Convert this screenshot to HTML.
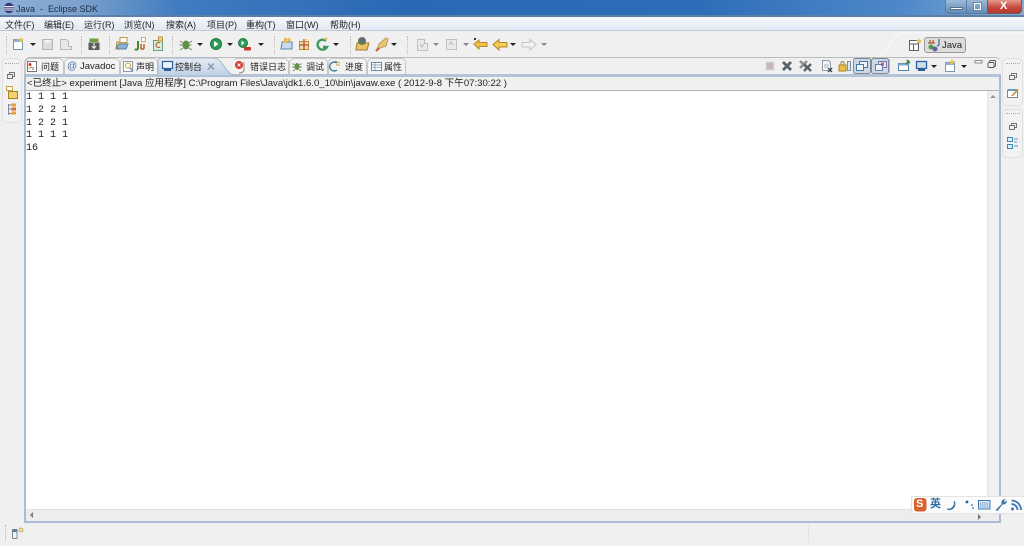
<!DOCTYPE html>
<html><head><meta charset="utf-8"><title>Java - Eclipse SDK</title>
<style>
html,body{margin:0;padding:0;width:1024px;height:546px;overflow:hidden;background:#f0f0f0}
body{position:relative;font-family:"Liberation Sans","Noto Sans CJK SC",sans-serif;font-size:9px;color:#222}
#w{position:absolute;left:0;top:0;width:1024px;height:546px;overflow:hidden;filter:blur(.3px)}
.a{position:absolute}
.t{position:absolute;white-space:nowrap;line-height:12px}
svg{position:absolute;overflow:visible}
.sep{position:absolute;width:0;border-left:1px dotted #bbb;height:18px;top:36px}
.tab{position:absolute;top:58px;height:16px;border:1px solid #c6c6c6;border-bottom:0;border-radius:5px 5px 0 0;background:#f3f3f3;box-sizing:border-box}
.arrow{position:absolute;width:0;height:0;border-left:3px solid transparent;border-right:3px solid transparent;border-top:3px solid #222}
</style></head><body><div id="w">

<!-- title bar -->
<div class="a" style="left:0;top:0;width:1024px;height:16px;background:linear-gradient(90deg,#8fb1d6 0,#7aa0cc 80px,#3f7cc0 180px,#2a69b4 400px,#2e6eb8 700px,#4d88c8 900px,#86abd2 1024px)"></div>
<div class="a" style="left:0;top:15px;width:1024px;height:2px;background:#5d7fa5"></div>
<svg style="left:3px;top:2px" width="12" height="12" viewBox="0 0 12 12"><circle cx="6" cy="6" r="5.2" fill="#3d3a7c"/><path d="M1 4.5h10M1 6.2h10M1.3 8h9.4" stroke="#e8e6f2" stroke-width=".9"/></svg>
<div class="t" style="left:16px;top:3px;font-size:9px;color:#1d2c40">Java&nbsp; -&nbsp; Eclipse SDK</div>
<!-- window buttons -->
<div class="a" style="left:945px;top:0;width:22px;height:14px;background:linear-gradient(#9dbbd8,#5f8db8);border:1px solid #5d7c9c;border-top:0;border-radius:0 0 0 4px;box-sizing:border-box"></div>
<div class="a" style="left:950px;top:7px;width:13px;height:3px;background:#fff;border:1px solid #56708c;box-sizing:border-box"></div>
<div class="a" style="left:967px;top:0;width:20px;height:14px;background:linear-gradient(#9dbbd8,#5f8db8);border-bottom:1px solid #5d7c9c;box-sizing:border-box"></div>
<div class="a" style="left:974px;top:3px;width:7px;height:7px;border:1.5px solid #fff;box-sizing:border-box;outline:1px solid #6a86a3"></div>
<div class="a" style="left:987px;top:0;width:35px;height:14px;background:linear-gradient(#e49a8c,#c5463a 60%,#b53a30);border:1px solid #6f5a5c;border-top:0;border-radius:0 0 4px 0;box-sizing:border-box"></div>
<div class="t" style="left:1000px;top:0px;font-size:11px;font-weight:bold;color:#fff">X</div>

<!-- menu bar -->
<div class="a" style="left:0;top:17px;width:1024px;height:14px;background:linear-gradient(#f6f8fc,#dfe7f3)"></div>
<div class="a" style="left:0;top:30px;width:1024px;height:1px;background:#c2c8d0"></div>
<div class="t" style="left:5px;top:19px">文件(F)</div>
<div class="t" style="left:44px;top:19px">编辑(E)</div>
<div class="t" style="left:84px;top:19px">运行(R)</div>
<div class="t" style="left:124px;top:19px">浏览(N)</div>
<div class="t" style="left:166px;top:19px">搜索(A)</div>
<div class="t" style="left:207px;top:19px">项目(P)</div>
<div class="t" style="left:246px;top:19px">重构(T)</div>
<div class="t" style="left:286px;top:19px">窗口(W)</div>
<div class="t" style="left:330px;top:19px">帮助(H)</div>

<!-- toolbar -->
<div class="sep" style="left:6px"></div><div class="sep" style="left:81px"></div><div class="sep" style="left:109px"></div><div class="sep" style="left:172px"></div><div class="sep" style="left:274px"></div><div class="sep" style="left:350px"></div><div class="sep" style="left:407px"></div>

<svg style="left:0;top:32px" width="640" height="24" viewBox="0 0 640 24">
<rect x="13.5" y="7.5" width="9" height="10" fill="#fff" stroke="#7d95ad"/><rect x="13.5" y="7.5" width="9" height="2.5" fill="#8fb0cf"/><path d="M21 5l1 2 2 0-1.500 1.500.5 2-2-1-2 1 .5-2L18 7h2z" fill="#e8c050"/>
<rect x="42.500" y="7.500" width="10" height="10" fill="#dcdcdc" stroke="#b4b4b4"/><rect x="45" y="8" width="5" height="3" fill="#f3f3f3"/>
<path d="M60.500 7.500h6l2 2v5h3v3h-11z" fill="#e8e8e8" stroke="#b8b8b8"/>
<rect x="89.500" y="6.500" width="9" height="3.500" fill="#6f9f3f"/><rect x="88.500" y="10.500" width="11" height="7.500" fill="#5d5d5d"/><path d="M94 11v5m-2-2l2 2.500 2-2.500" stroke="#fff" fill="none"/>
<path d="M117 10h9v7h-10z" fill="#f0d78a" stroke="#a88b3b"/><path d="M117 15l2-3h9l-2 5h-9z" fill="#8eb3d8" stroke="#5d7da0"/><rect x="120" y="5.500" width="7" height="5" fill="#fff" stroke="#b89a42"/>
<path d="M138 9v7c0 2-2 2-3 1" stroke="#3d8a32" stroke-width="2" fill="none"/><path d="M141 12v4c0 1.500 2.500 1.500 3 0v-4" stroke="#c6582c" stroke-width="1.500" fill="none"/><rect x="141.500" y="5.500" width="4" height="4" fill="#fff" stroke="#c9b15a"/>
<rect x="153.500" y="8.500" width="9" height="10" fill="#d7ecd9" stroke="#6ba17a"/><path d="M160 11a2.500 2.500 0 1 0 0 4" stroke="#b84f2a" fill="none"/><rect x="158.500" y="5" width="4" height="4" fill="#f3d480" stroke="#b89a42"/>
<ellipse cx="186" cy="13" rx="3.500" ry="4.500" fill="#5f8f4a"/><path d="M180 9l3 2m6 0l3-2M179.500 13h3m6 0h3M180 18l3-2m6 0l3 2" stroke="#6e8a4c"/>
<circle cx="216" cy="12" r="5.500" fill="#2e9b57" stroke="#1c7a41"/><path d="M214 9l4.500 3-4.500 3z" fill="#fff"/>
<circle cx="243" cy="11" r="4.500" fill="#2e9b57" stroke="#1c7a41"/><path d="M241.500 8.500l3 2.500-3 2.500z" fill="#fff"/><rect x="244" y="15" width="7" height="3.500" rx="1" fill="#c8382a"/>
<path d="M282 10h10v7h-11z" fill="#c8dbee" stroke="#5f86ad"/><path d="M284 6h3v5h-3z" fill="#e0b85a"/><path d="M289 5l.8 1.700 1.700.3-1.200 1.200.3 1.800-1.600-.8-1.600.8.3-1.800L286.500 7l1.700-.3z" fill="#e8c050"/>
<rect x="299.500" y="9.500" width="9" height="8" fill="#efdcb0" stroke="#c48a2f"/><path d="M304 7v11M299 13h10" stroke="#b8502c" stroke-width="1.300"/><path d="M305 5l1 2h2l-1.500 1.500" fill="#e8c050"/>
<path d="M326 9a5 5 0 1 0 1 6h-4" stroke="#3e9a5c" stroke-width="2.400" fill="none"/><circle cx="326" cy="7" r="1.500" fill="#e8c050"/>
<path d="M357 11h12l-2 7h-11z" fill="#eec268" stroke="#a07c2c"/><circle cx="362" cy="9" r="4" fill="#5d7f4b"/><circle cx="363" cy="8" r="2" fill="#6d5aa0"/>
<path d="M377 18l2-6 7-6 2 1-2 7-6 2z" fill="#e8c878" stroke="#b89c58"/><path d="M376 19l3-3" stroke="#c8582c" stroke-width="2"/>
<path d="M417.500 7.500h7v4h3v7h-10z" fill="#eaeaea" stroke="#c0c0c0"/><path d="M420 12l2 3 2-3" stroke="#bbb" fill="none"/>
<path d="M446.500 7.500h10v10h-10z" fill="#eaeaea" stroke="#c0c0c0"/><path d="M449 13l2-3 2 3" stroke="#bbb" fill="none"/>
<path d="M474 12l5-4v2.500h8v4h-8V17z" fill="#eec24a" stroke="#b58a22"/><rect x="474" y="6" width="2" height="2" fill="#333"/>
<path d="M493 12.500l6-5v3h8v4.500h-8v3z" fill="#f0cc5a" stroke="#b58a22"/>
<path d="M536 12.500l-6-5v3h-8v4.500h8v3z" fill="#f2f2f2" stroke="#c6c6c6"/>
</svg>
<div class="arrow" style="left:30px;top:43px"></div>
<div class="arrow" style="left:197px;top:43px"></div>
<div class="arrow" style="left:227px;top:43px"></div>
<div class="arrow" style="left:258px;top:43px"></div>
<div class="arrow" style="left:333px;top:43px"></div>
<div class="arrow" style="left:391px;top:43px"></div>
<div class="arrow" style="left:433px;top:43px;border-top-color:#888"></div>
<div class="arrow" style="left:463px;top:43px;border-top-color:#888"></div>
<div class="arrow" style="left:510px;top:43px"></div>
<div class="arrow" style="left:541px;top:43px;border-top-color:#888"></div>

<!-- perspective bar -->
<svg style="left:870px;top:30px" width="154" height="28" viewBox="0 0 154 28"><path d="M6 27C18 24 20 3 36 3H154" fill="none" stroke="#f8f8f8" stroke-width="1.200"/></svg>
<svg style="left:909px;top:38px" width="14" height="14" viewBox="0 0 14 14"><rect x=".5" y="2.500" width="9" height="10" fill="#fff" stroke="#55606a"/><path d="M.5 6h9M4.500 6v6.500" stroke="#55606a"/><path d="M10 0l1 2 2 .2-1.500 1.500.5 2-2-1-2 1 .5-2L7 2.200 9 2z" fill="#e8c050"/></svg>
<div class="a" style="left:924px;top:37px;width:42px;height:16px;background:#dcdcdc;border:1px solid #9a9a9a;border-radius:3px;box-sizing:border-box"></div>
<svg style="left:927px;top:38px" width="14" height="14" viewBox="0 0 14 14"><circle cx="4" cy="9" r="2.500" fill="#4f9a4f"/><circle cx="8" cy="11" r="2.500" fill="#6a5aa0"/><path d="M1 5h7M3 2v3M6 2v3" stroke="#b05a2c" stroke-width="1.300"/><path d="M12 1v5c0 1.500-1 2-2 1.500" stroke="#3a5f90" fill="none" stroke-width="1.200"/></svg>
<div class="t" style="left:942px;top:40px;font-size:9.500px;color:#222">Java</div>

<!-- main view frame -->
<div class="a" style="left:24px;top:57px;width:977px;height:466px;background:#f0f0f0;border-radius:6px 6px 0 0;border-top:1px solid #bcbcbc;border-left:1px solid #c4c4c4;box-sizing:border-box"></div>
<div class="a" style="left:24px;top:74px;width:977px;height:3px;background:#b4c4d6"></div>
<div class="a" style="left:24px;top:75px;width:2px;height:448px;background:#a9bcd1"></div>
<div class="a" style="left:999px;top:75px;width:2px;height:448px;background:#a9bcd1"></div>
<div class="a" style="left:24px;top:521px;width:977px;height:2px;background:#a9bcd1"></div>

<!-- tabs -->
<div class="tab" style="left:25px;width:39px"></div>
<div class="tab" style="left:64px;width:56px"></div>
<div class="tab" style="left:120px;width:38px"></div>
<svg style="left:157px;top:57px" width="82" height="19" viewBox="0 0 82 19"><defs><linearGradient id="g" x1="0" y1="0" x2="0" y2="1"><stop offset="0" stop-color="#e6edf5"/><stop offset="1" stop-color="#bccfe3"/></linearGradient></defs><path d="M1 19V5q0-4 4-4h52c8 0 12 16 20 17h5v1z" fill="url(#g)" stroke="#a7b8ca"/></svg>
<div class="tab" style="left:233px;width:56px;border-left:0"></div>
<div class="tab" style="left:289px;width:39px"></div>
<div class="tab" style="left:328px;width:39px"></div>
<div class="tab" style="left:367px;width:39px"></div>

<svg style="left:26px;top:60px" width="390" height="15" viewBox="0 0 390 15">
<rect x="1.500" y="1.500" width="9" height="10" fill="#fff" stroke="#777"/><circle cx="4" cy="4.500" r="1.500" fill="#c8382a"/><path d="M3 9l2-2 1 1" stroke="#d09a30" fill="none"/><path d="M7 7v3" stroke="#48a" />
<rect x="97.500" y="1.500" width="9" height="10" fill="#fff" stroke="#8a9aa8"/><circle cx="102" cy="5.500" r="2.500" fill="none" stroke="#d09a30"/><path d="M104 8l3 3" stroke="#6a8ab0" stroke-width="1.500"/>
<rect x="136.500" y="1.500" width="10" height="7" fill="#eef3f9" stroke="#2f5f99" stroke-width="1.200"/><rect x="138" y="9" width="7" height="2" fill="#2f5f99"/>
<path d="M182 3.500l6 6m0-6l-6 6" stroke="#8b95a3" stroke-width="1.300"/>
<circle cx="213" cy="5" r="4" fill="#d8392e"/><path d="M211.500 3.500l3 3m0-3l-3 3" stroke="#fff"/><path d="M218 2v8c0 2-3 3-5 3" stroke="#9a8a70" fill="none"/>
<ellipse cx="271" cy="6.500" rx="2.500" ry="3.500" fill="#5f8f4a"/><path d="M266.500 3.500l2 1.500m5 0l2-1.500M266 7h2.500m5 0h2.500M267 11l2-1.500m4 0l2 1.500" stroke="#6e8a4c"/>
<path d="M311 3a4.500 4.500 0 1 0 0 7" stroke="#3a7a9a" stroke-width="1.400" fill="none"/><path d="M309 1l5 2M310 5h4" stroke="#c8a040" />
<rect x="345.500" y="2.500" width="10" height="8" fill="#fff" stroke="#6a8aa8"/><path d="M345.500 5h10M345.500 7.700h10M349 2.500v8" stroke="#6a8aa8" stroke-width=".7"/>
</svg>
<div class="t" style="left:67px;top:61px;color:#3f6f9f;font-size:10px">@</div>
<div class="t" style="left:41px;top:61px">问题</div>
<div class="t" style="left:80px;top:61px;font-size:9.500px">Javadoc</div>
<div class="t" style="left:136px;top:61px">声明</div>
<div class="t" style="left:175px;top:61px">控制台</div>
<div class="t" style="left:250px;top:61px">错误日志</div>
<div class="t" style="left:306px;top:61px">调试</div>
<div class="t" style="left:345px;top:61px">进度</div>
<div class="t" style="left:384px;top:61px">属性</div>

<!-- console toolbar -->
<svg style="left:760px;top:58px" width="240" height="16" viewBox="0 0 240 16">
<rect x="6" y="4" width="8" height="8" fill="#c8b8b8" stroke="#dcdcdc"/>
<path d="M23 4l8 8m0-8l-8 8" stroke="#5a6268" stroke-width="2.800"/>
<path d="M40 3l7 7m0-7l-7 7" stroke="#8a9298" stroke-width="2.400"/><path d="M44 6l7 7m0-7l-7 7" stroke="#5a6268" stroke-width="2.400"/>
<path d="M62.500 2.500h6l2 2v8h-8z" fill="#f4f4f4" stroke="#8a9aaa"/><path d="M64 7h5M64 9h4" stroke="#8a9aaa" stroke-width=".7"/><path d="M68 10l4 4m0-4l-4 4" stroke="#444" stroke-width="1.400"/>
<rect x="79" y="7" width="7" height="6" fill="#f0c040" stroke="#a88420"/><path d="M81 7V5a1.500 1.500 0 0 1 3 0v2" stroke="#a08030" fill="none"/><rect x="87.500" y="3.500" width="3" height="9" fill="#dce8f4" stroke="#7890a8"/>
<rect x="93.500" y=".5" width="17" height="15" rx="2" fill="#ccd8e4" stroke="#7d8a98"/>
<rect x="111.500" y=".5" width="17" height="15" rx="2" fill="#ccd8e4" stroke="#7d8a98"/>
<rect x="99.500" y="3.500" width="8" height="6" fill="#f0f4f9" stroke="#4a7aac"/><rect x="96.500" y="6.500" width="7" height="6" fill="#f0f4f9" stroke="#4a7aac"/>
<rect x="118.500" y="3.500" width="8" height="6" fill="#eee8f4" stroke="#7a7ab0"/><rect x="115.500" y="6.500" width="7" height="6" fill="#f0f4f9" stroke="#6a7ab0"/><path d="M121 4.500l3 3m0-3l-3 3" stroke="#b04a6a"/>
<path d="M129.500 1v14" stroke="#bbb"/>
<rect x="138.500" y="5.500" width="10" height="7" fill="#fff" stroke="#4f80aa"/><rect x="138.500" y="5.500" width="10" height="2" fill="#7fa8cc"/><path d="M146 6l3-3m-2-1l3 3" stroke="#3a8a3a" stroke-width="1.700"/>
<rect x="156.500" y="3.500" width="10" height="7" fill="#cfe0f0" stroke="#2f5f99" stroke-width="1.300"/><rect x="158" y="11" width="7" height="2" fill="#2f5f99"/>
<rect x="185.500" y="4.500" width="9" height="9" fill="#fff" stroke="#7d95ad"/><rect x="185.500" y="4.500" width="9" height="2.500" fill="#8fb0cf"/><path d="M192 1l1 2 2 .2-1.500 1.500.5 2-2-1-2 1 .5-2L189 3.200 191 3z" fill="#e8c050"/>
<rect x="215" y="2.500" width="7" height="2.500" fill="#f8f8f8" stroke="#777" stroke-width=".8"/>
<rect x="229.500" y="2.500" width="6" height="6" fill="none" stroke="#555" rx="1" stroke-width=".9"/><rect x="228" y="4.500" width="6" height="5" fill="#f0f0f0" stroke="#555" rx="1" stroke-width=".9"/>
</svg>
<div class="arrow" style="left:931px;top:65px"></div>
<div class="arrow" style="left:961px;top:65px"></div>

<!-- console header -->
<div class="a" style="left:26px;top:77px;width:973px;height:13px;background:#f0f0f0"></div>
<div class="a" style="left:26px;top:90px;width:973px;height:1px;background:#aeb4ba"></div>
<div class="t" style="left:27px;top:78px;font-size:9.570px;color:#222">&lt;已终止&gt; experiment [Java 应用程序] C:\Program Files\Java\jdk1.6.0_10\bin\javaw.exe ( 2012-9-8 下午07:30:22 )</div>

<!-- console -->
<div class="a" style="left:26px;top:91px;width:961px;height:418px;background:#fff"></div>
<div class="a" style="left:26px;top:92px;font-family:'Liberation Mono',monospace;font-size:10px;line-height:12.800px;color:#222;white-space:pre">1 1 1 1
1 2 2 1
1 2 2 1
1 1 1 1
16</div>
<!-- scrollbars -->
<div class="a" style="left:987px;top:91px;width:12px;height:430px;background:#f0f0f0;border-left:1px solid #e4e4e4;box-sizing:border-box"></div>
<div class="a" style="left:26px;top:509px;width:973px;height:12px;background:#ededed;border-top:1px solid #e2e2e2;box-sizing:border-box"></div>
<div class="a" style="left:990px;top:95px;border-left:3px solid transparent;border-right:3px solid transparent;border-bottom:3px solid #999"></div>
<div class="a" style="left:30px;top:512px;border-top:3px solid transparent;border-bottom:3px solid transparent;border-right:3px solid #777"></div>
<div class="a" style="left:978px;top:514px;border-top:3px solid transparent;border-bottom:3px solid transparent;border-left:3px solid #777"></div>

<!-- left trim -->
<div class="a" style="left:2px;top:58px;width:20px;height:65px;border:1px solid #e0e0e0;border-radius:5px;background:#f2f2f2;box-sizing:border-box"></div>
<div class="a" style="left:5px;top:63px;width:14px;border-top:1px dotted #aaa"></div>
<svg style="left:4px;top:70px" width="16" height="46" viewBox="0 0 16 46">
<rect x="5.500" y="2.500" width="5" height="4" fill="none" stroke="#555" stroke-width=".8"/><rect x="3.500" y="4.500" width="5" height="4" fill="#f0f0f0" stroke="#555" stroke-width=".8"/>
<path d="M2.500 16.500h6v4h-6z" fill="#fff" stroke="#c8a040"/><path d="M4.500 21.500h9v7h-9z" fill="#f3d070" stroke="#a88420"/>
<path d="M4.500 34v11M4.500 35h3M4.500 39h3M4.500 43.500h3" stroke="#7a8a9a"/><rect x="7.500" y="33.500" width="4.500" height="3" fill="#e8a040"/><rect x="7.500" y="37.500" width="4.500" height="3" fill="#d07040"/><rect x="7.500" y="41.500" width="4.500" height="3" fill="#e8a040"/>
</svg>

<!-- right trim -->
<div class="a" style="left:1002px;top:58px;width:21px;height:48px;border:1px solid #e0e0e0;border-radius:5px;background:#f2f2f2;box-sizing:border-box"></div>
<div class="a" style="left:1002px;top:109px;width:21px;height:49px;border:1px solid #e0e0e0;border-radius:5px;background:#f2f2f2;box-sizing:border-box"></div>
<div class="a" style="left:1006px;top:63px;width:14px;border-top:1px dotted #aaa"></div>
<div class="a" style="left:1006px;top:113px;width:14px;border-top:1px dotted #aaa"></div>
<svg style="left:1005px;top:70px" width="18" height="84" viewBox="0 0 18 84">
<rect x="6.500" y="3.500" width="5" height="4" fill="none" stroke="#555" stroke-width=".8"/><rect x="4.500" y="5.500" width="5" height="4" fill="#f0f0f0" stroke="#555" stroke-width=".8"/>
<rect x="2.500" y="20.500" width="10" height="7" fill="#fff" stroke="#7a8a9a"/><rect x="2.500" y="19" width="10" height="2" fill="#6a9abc"/><path d="M6 26l6-7 2 1-6 6z" fill="#c89048"/>
<rect x="6.500" y="53.500" width="5" height="4" fill="none" stroke="#555" stroke-width=".8"/><rect x="4.500" y="55.500" width="5" height="4" fill="#f0f0f0" stroke="#555" stroke-width=".8"/>
<rect x="2.500" y="67.500" width="5" height="4" fill="#dff0fa" stroke="#3a8ab8"/><rect x="2.500" y="74.500" width="5" height="4" fill="#dff0fa" stroke="#3a8ab8"/><path d="M9 69h4M9 72h3M9 76h4" stroke="#5a9ac0"/>
</svg>

<!-- status bar -->
<div class="a" style="left:5px;top:525px;height:16px;border-left:1px dotted #bbb"></div>
<svg style="left:12px;top:527px" width="14" height="13" viewBox="0 0 14 13"><rect x=".5" y="2.500" width="4.500" height="9" fill="#eef2f6" stroke="#7a8a9a"/><rect x=".5" y="2.500" width="4.500" height="2.500" fill="#5d7a9a"/><circle cx="9" cy="3" r="2" fill="#f2e4b0" stroke="#a89a40" stroke-width=".7"/></svg>
<div class="a" style="left:808px;top:525px;height:17px;border-left:1px solid #e4e4e4"></div>

<!-- sogou IME bar -->
<div class="a" style="left:911px;top:496px;width:113px;height:18px;background:#fbfbfb;border:1px solid #e3e3e3;border-right:0;box-sizing:border-box"></div>
<svg style="left:913px;top:497px" width="111" height="16" viewBox="0 0 111 16">
<rect x="1" y="1" width="12.500" height="13.500" rx="3" fill="#d9622a"/>
<path d="M41 4a5.500 5.500 0 0 1-7 8 6 6 0 0 0 7-8z" fill="#3a7ab0" stroke="#3a7ab0"/>
<circle cx="54" cy="5" r="1.400" fill="#2a5a88"/><circle cx="59" cy="8" r="1" fill="#5a90c0"/><circle cx="60" cy="11" r="1" fill="#5a90c0"/>
<rect x="65.500" y="3.500" width="11.500" height="8.500" fill="#e0ecf7" stroke="#3a7ab0"/><path d="M67 6h9M67 8h9M67 10h9" stroke="#3a7ab0" stroke-dasharray="1 .8"/>
<path d="M83 13l6-6a3 3 0 0 1 1-4l2-.5-1.500 2 1 1 2-1.500a3 3 0 0 1-4 3l-5 6.500z" fill="#3a7ab0" stroke="#3a7ab0" stroke-width=".6"/>
<circle cx="99.500" cy="12" r="1.500" fill="#3a7ab0"/><path d="M98.500 7a6 6 0 0 1 6 6M98.500 3.500a9.500 9.500 0 0 1 9.500 9.500" fill="none" stroke="#3a7ab0" stroke-width="1.800"/>
</svg>
<div class="t" style="left:916px;top:498px;font-size:11px;font-weight:bold;color:#fff;line-height:13px">S</div>
<div class="t" style="left:930px;top:498px;font-size:11px;font-weight:bold;color:#2f6fa8;line-height:13px">英</div>

</div></body></html>
